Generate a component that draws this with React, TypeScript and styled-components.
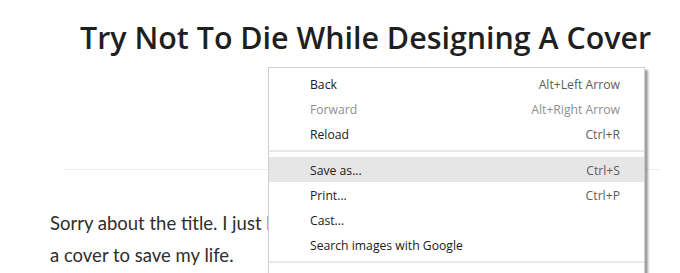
import React from 'react';
import styled, { createGlobalStyle } from 'styled-components';

const GlobalStyle = createGlobalStyle`
  html, body {
    margin: 0;
    padding: 0;
    background: #fff;
    overflow: hidden;
  }
`;

const Page = styled.div`
  position: relative;
  width: 680px;
  height: 273px;
  overflow: hidden;
  padding-top: 19px;
  box-sizing: border-box;
`;

const Article = styled.article`
  margin-left: 50px;
  width: 610px;
  font-family: Lato, 'Open Sans', sans-serif;
`;

const Title = styled.h1`
  margin: 0;
  padding-left: 30px;
  font-family: 'Open Sans', 'Noto Sans', sans-serif;
  font-size: 30.4px;
  line-height: 38px;
  font-weight: 600;
  color: #1f1f1f;
  white-space: nowrap;
`;

const Rule = styled.hr`
  margin: 112px 0 0 15px;
  border: 0;
  border-top: 1px solid #ececec;
  width: 595px;
`;

const Body = styled.p`
  margin: 37px 0 0;
  font-size: 18.5px;
  line-height: 32px;
  color: #2e2e2e;
  white-space: nowrap;
`;

const Menu = styled.ul`
  position: absolute;
  left: 268px;
  top: 67px;
  width: 377px;
  margin: 0;
  padding: 3px 0 30px;
  list-style: none;
  box-sizing: border-box;
  background: #fff;
  border: 1px solid #cfcfcf;
  box-shadow: 3px 3px 2px rgba(0, 0, 0, 0.38);
  font-family: 'Open Sans', 'Noto Sans', sans-serif;
  font-size: 12.2px;
`;

const Item = styled.li<{ $disabled?: boolean; $active?: boolean }>`
  display: flex;
  justify-content: space-between;
  align-items: center;
  height: 25px;
  padding: 2px 24px 0 41px;
  box-sizing: border-box;
  color: ${(p) => (p.$disabled ? '#8f8f8f' : '#202020')};
  background: ${(p) => (p.$active ? '#e6e6e6' : 'transparent')};
`;

const Shortcut = styled.span<{ $disabled?: boolean }>`
  color: ${(p) => (p.$disabled ? '#8f8f8f' : '#5c5c5c')};
`;

const Separator = styled.li`
  height: 2px;
  margin: 4px 0 5px;
  background: #e8e8e8;
`;

type Entry = { label: string; shortcut?: string; disabled?: boolean; active?: boolean } | 'sep';

const entries: Entry[] = [
  { label: 'Back', shortcut: 'Alt+Left Arrow' },
  { label: 'Forward', shortcut: 'Alt+Right Arrow', disabled: true },
  { label: 'Reload', shortcut: 'Ctrl+R' },
  'sep',
  { label: 'Save as...', shortcut: 'Ctrl+S', active: true },
  { label: 'Print...', shortcut: 'Ctrl+P' },
  { label: 'Cast...' },
  { label: 'Search images with Google' },
  'sep',
];

const App: React.FC = () => {
  return (
    <Page>
      <GlobalStyle />
      <Article>
        <Title>Try Not To Die While Designing A Cover</Title>
        <Rule />
        <Body>
          Sorry about the title. I just literally had to design
          <br />
          a cover to save my life.
        </Body>
      </Article>
      <Menu>
        {entries.map((e, i) =>
          e === 'sep' ? (
            <Separator key={i} />
          ) : (
            <Item key={i} $disabled={e.disabled} $active={e.active}>
              <span>{e.label}</span>
              {e.shortcut && <Shortcut $disabled={e.disabled}>{e.shortcut}</Shortcut>}
            </Item>
          )
        )}
      </Menu>
    </Page>
  );
};

export default App;
